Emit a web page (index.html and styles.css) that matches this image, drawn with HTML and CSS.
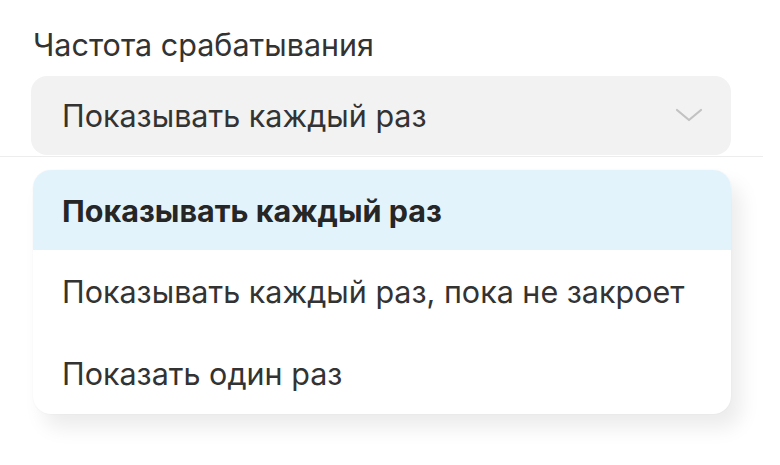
FILE: index.html
```html
<!DOCTYPE html>
<html lang="en">

<head>
    <meta charset="UTF-8">
    <meta name="viewport" content="width=device-width, initial-scale=1">
    <title>Частота срабатывания</title>
    <link rel="stylesheet" href="styles.css">
</head>

<body>
    <div class="field">
        <label class="field_label">Частота срабатывания</label>
        <div class="select_box">
            <span class="select_value">Показывать каждый раз</span>
            <svg class="select_arrow" width="28" height="16" viewBox="0 0 28 16">
                <path d="M2 2 L14 12 L26 2" fill="none" stroke="#c2c2c2" stroke-width="2.2" stroke-linecap="round" stroke-linejoin="round"/>
            </svg>
        </div>
    </div>

    <ul class="dropdown">
        <li class="dropdown_item active">Показывать каждый раз</li>
        <li class="dropdown_item">Показывать каждый раз, пока не закроет</li>
        <li class="dropdown_item">Показать один раз</li>
    </ul>
</body>

</html>
```

FILE: styles.css
```css
*{
    padding: 0px;
    margin: 0px;
    box-sizing: border-box;
    font-family: Inter, "Noto Sans", sans-serif;
}

body{
    width: 780px;
    height: 465px;
    background: #ffffff;
    color: #333333;
    overflow: hidden;
}

.field{
    width: 763px;
    padding: 28px 0 0 31px;
    border-bottom: 1px solid #ededed;
    padding-bottom: 1px;
}

.field_label{
    display: block;
    font-size: 30.5px;
    line-height: 34px;
    margin-left: 2px;
    margin-bottom: 14px;
    color: #333333;
}

.select_box{
    width: 700px;
    height: 79px;
    background: #f2f2f2;
    border-radius: 16px;
    display: flex;
    align-items: center;
    justify-content: space-between;
    padding: 0 28px 0 31px;
}

.select_value{
    font-size: 30.5px;
    color: #333333;
}

.select_arrow{
    display: block;
}

.dropdown{
    list-style: none;
    width: 698px;
    margin: 13px 0 0 33px;
    background: #ffffff;
    border-radius: 18px;
    overflow: hidden;
    box-shadow: 10px 14px 20px rgba(0, 0, 0, 0.08), 0 0 2px rgba(0, 0, 0, 0.05);
}

.dropdown_item{
    height: 82px;
    display: flex;
    align-items: center;
    padding-left: 29px;
    font-size: 30.5px;
    color: #333333;
}

.dropdown_item.active{
    height: 80px;
    background: #e3f3fc;
    font-weight: 700;
    color: #262626;
}
```
